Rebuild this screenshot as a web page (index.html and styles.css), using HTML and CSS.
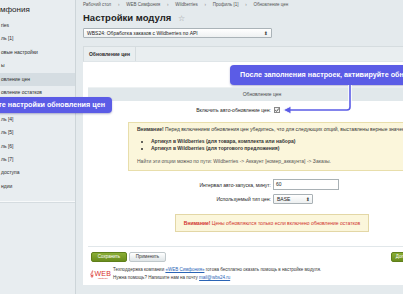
FILE: index.html
```html
<!DOCTYPE html>
<html lang="ru">
<head>
<meta charset="utf-8">
<link rel="stylesheet" href="styles.css">
</head>
<body>
<div class="page">
  <aside class="side">
    <div class="side-title">мфония</div>
    <ul class="menu">
      <li>ries</li>
      <li>ль [1]</li>
      <li>овые настройки</li>
      <li>ы</li>
      <li class="active">овление цен</li>
      <li>овление остатков</li>
      <li></li>
      <li>ль [4]</li>
      <li>ль [5]</li>
      <li>ль [6]</li>
      <li>ль [7]</li>
      <li>доступа</li>
      <li>ндии</li>
    </ul>
  </aside>
  <main class="main">
    <div class="crumbs">Рабочий стол <span class="sep">›</span> WEB Симфония <span class="sep">›</span> Wildberries <span class="sep">›</span> Профиль [1] <span class="sep">›</span> Обновление цен</div>
    <h1 class="title">Настройки модуля <span class="star">☆</span></h1>
    <div class="modsel"><span>WBS24: Обработка заказов с Wildberries по API</span><span class="updown">⬍</span></div>
    <div class="panel">
      <div class="tabs"><div class="tab">Обновление цен</div></div>
      <div class="content">
        <div class="inner">
          <div class="heading">Обновление цен</div>
          <div class="row check-row">
            <div class="lbl">Включить авто-обновление цен:</div>
            <div class="ctl"><span class="cb"><svg width="6" height="6" viewBox="0 0 6 6"><path d="M1.2 3.1 L2.5 4.4 L4.9 1.4" fill="none" stroke="#555" stroke-width="1"/></svg></span></div>
          </div>
          <div class="note">
            <p><b>Внимание!</b> Перед включением обновления цен убедитесь, что для следующих опций, выставлены верные значения</p>
            <ul>
              <li><b>Артикул в Wildberries (для товара, комплекта или набора)</b></li>
              <li><b>Артикул в Wildberries (для торгового предложения)</b></li>
            </ul>
            <p class="path">Найти эти опции можно по пути: Wildberries -&gt; Аккаунт [номер_аккаунта] -&gt; Заказы.</p>
          </div>
          <div class="row field-row">
            <div class="lbl">Интервал авто-запуска, минут:</div>
            <div class="ctl"><span class="input">60</span></div>
          </div>
          <div class="row type-row">
            <div class="lbl">Используемый тип цен:</div>
            <div class="ctl"><span class="select">BASE<span class="updown">⬍</span></span></div>
          </div>
          <div class="warn"><b>Внимание!</b> Цены обновляются только если включено обновление остатков</div>
        </div>
        <div class="buttons">
          <span class="btn green">Сохранить</span>
          <span class="btn gray">Применить</span>
          <span class="btn green right">Дополнительно</span>
        </div>
        <div class="footer">
          <div class="logo">
            <svg width="6" height="12" viewBox="0 0 6 12"><path d="M3.5 11 C1 11 1 8 3 8 C5 8 5 10.5 3 10.5 M3 11 L3.2 1.5 C3.3 0.5 4.8 0.8 4.2 2.2 C3.6 3.6 1 5 1 7 C1 9.5 5.5 9.5 5.2 7" fill="none" stroke="#d8322c" stroke-width="0.8"/></svg>
            <span class="logo-text"><span class="logo-web">WEB</span><span class="logo-sub">симфония</span></span>
          </div>
          <div class="ftext">
            <div>Техподдержка компании <a href="#">«WEB Симфония»</a> готова бесплатно оказать помощь в настройке модуля.</div>
            <div>Нужна помощь? Напишите нам на почту <a href="#">mail@wbs24.ru</a></div>
          </div>
        </div>
      </div>
    </div>
  </main>
</div>
<div class="callout callout-a">После заполнения настроек, активируйте обновление</div>
<div class="callout callout-b">те настройки обновления цен</div>
<svg class="arrow" width="403" height="294" viewBox="0 0 403 294">
  <path d="M350 85 L350 107 Q350 110 347 110 L290 110" fill="none" stroke="#fff" stroke-width="3.5"/>
  <path d="M283 110 L291 106 L291 114 Z" fill="#5b5ce6" stroke="#fff" stroke-width="1"/>
  <path d="M350 85 L350 107 Q350 110 347 110 L290 110" fill="none" stroke="#5b5ce6" stroke-width="1.6"/>
</svg>
</body>
</html>
```
FILE: styles.css
```css
* { box-sizing: border-box; }
html, body { margin: 0; padding: 0; }
body {
  width: 403px;
  height: 294px;
  overflow: hidden;
  position: relative;
  background: #e4eaed;
  color: #333;
  font-family: "Liberation Sans", Arial, sans-serif;
}
.page { display: flex; height: 294px; }

/* sidebar */
.side {
  width: 76px;
  flex: none;
  background: #e8edf0;
  border-right: 1px solid #cdd5d9;
}
.side-title {
  font-size: 8px;
  line-height: 10px;
  padding-top: 5px;
  color: #222;
  white-space: nowrap;
}
.menu {
  list-style: none;
  margin: 4px 0 0;
  padding: 0 0 8px;
  border-bottom: 1px solid #f7f9fa;
  box-shadow: 0 1px 0 #d5dce0;
}
.menu li {
  height: 13.4px;
  line-height: 13.4px;
  font-size: 5px;
  padding-left: 1px;
  white-space: nowrap;
  color: #2c2c2c;
}
.menu li.active { background: #d5dde2; }

/* main */
.main {
  flex: none;
  width: 327px;
  padding: 2px 0 0 7px;
}
.crumbs {
  font-size: 4.5px;
  line-height: 6px;
  height: 6px;
  color: #555;
  white-space: nowrap;
}
.crumbs .sep { margin: 0 5.5px; color: #888; }
.title {
  margin: 4px 0 0;
  font-size: 9.5px;
  line-height: 12px;
  height: 12px;
  font-weight: bold;
  color: #222;
  white-space: nowrap;
}
.star { font-weight: normal; color: #999; font-size: 8px; margin-left: 4px; font-family: "DejaVu Sans", sans-serif; }
.modsel {
  margin-top: 4px;
  width: 189px;
  height: 10px;
  border: 1px solid #aab3b8;
  background: linear-gradient(#ffffff, #eef1f2);
  border-radius: 1px;
  font-size: 5px;
  line-height: 8px;
  padding: 0 3px;
  display: flex;
  justify-content: space-between;
  white-space: nowrap;
  color: #222;
}
.updown { font-size: 5px; color: #444; font-family: "DejaVu Sans", sans-serif; }

.panel { width: 360px; margin-top: 8px; }
.tabs {
  height: 16px;
  background: #e9eef0;
  border: 1px solid #d5dcdf;
  border-bottom-color: #dfe5e8;
  display: flex;
}
.tab {
  width: 52px;
  border-right: 1px solid #d5dcdf;
  font-size: 5px;
  line-height: 14px;
  font-weight: bold;
  text-align: center;
  color: #2b2b2b;
}
.content {
  background: #fff;
  padding: 25px 0 3px 5px;
  height: 223px;
}
.inner {
  width: 348px;
  border-top: 1px solid #edf1f2;
  padding-bottom: 14px;
  border-bottom: 1px solid #e1e7ea;
}
.heading {
  height: 13px;
  line-height: 13px;
  background: #e1e8eb;
  text-align: center;
  font-size: 5px;
  color: #4b4b4b;
}
.row { display: flex; align-items: center; }
.lbl {
  width: 183px;
  flex: none;
  text-align: right;
  font-size: 5px;
  color: #222;
  white-space: nowrap;
}
.ctl { margin-left: 2px; display: flex; align-items: center; }
.check-row { height: 14px; margin-top: 2px; }
.cb {
  width: 6px; height: 6px;
  border: 0.6px solid #888;
  background: #f2f2f2;
  margin-left: 1px;
  display: block;
  position: relative;
}
.cb svg { position: absolute; left: -0.6px; top: -0.6px; }
.note {
  margin: 5px 0 0 40px;
  height: 49px;
  background: #fbf6db;
  border: 1px solid #e8deab;
  padding: 3px 0 0 8px;
  font-size: 5px;
  line-height: 7px;
  color: #333;
  white-space: nowrap;
}
.note p { margin: 0; }
.note ul { margin: 5px 0 0; padding-left: 14px; }
.note li { line-height: 7px; }
.note .path { margin-top: 6px; color: #555; }
.field-row { height: 11px; margin-top: 8px; }
.input {
  width: 66px; height: 11px;
  border: 1px solid #a9b1b5;
  background: #fff;
  font-size: 5px;
  line-height: 9px;
  padding-left: 2px;
  display: block;
  color: #222;
}
.type-row { height: 10px; margin-top: 4px; }
.select {
  width: 40px; height: 10px;
  border: 1px solid #a9b1b5;
  border-radius: 1px;
  background: linear-gradient(#fff, #eceff0);
  font-size: 5px;
  line-height: 8px;
  padding: 0 2px 0 3px;
  display: flex;
  justify-content: space-between;
  color: #222;
}
.warn {
  margin: 10px 0 0 87px;
  width: 194px;
  height: 18px;
  background: #fbf6db;
  border: 1px solid #e3d7a6;
  text-align: center;
  font-size: 5px;
  line-height: 16px;
  color: #d0322d;
  white-space: nowrap;
}
.buttons {
  display: flex;
  gap: 2px;
  padding: 5px 3px 0 3px;
  width: 348px;
}
.btn {
  height: 10px;
  font-size: 4.5px;
  line-height: 8px;
  border-radius: 2px;
  text-align: center;
  white-space: nowrap;
  display: block;
}
.btn.green {
  width: 36px;
  background: linear-gradient(#8aae35, #6a8d1d);
  border: 1px solid #5f7f1a;
  color: #fff;
}
.btn.gray {
  width: 37px;
  background: linear-gradient(#ffffff, #dfe5e7);
  border: 1px solid #c0c8cb;
  color: #333;
}
.btn.right { margin-left: auto; width: 42px; }
.footer {
  display: flex;
  align-items: center;
  margin-top: 5px;
  padding-left: 2px;
  height: 13px;
}
.logo { display: flex; align-items: flex-end; width: 21px; flex: none; }
.logo-text { display: flex; flex-direction: column; align-items: center; margin-left: 0.5px; }
.logo-web {
  font-size: 7px;
  line-height: 7px;
  font-weight: normal;
  color: #d8322c;
  letter-spacing: 0.2px;
}
.logo-sub { font-size: 2px; line-height: 3px; color: #d8322c; }
.ftext { font-size: 4.5px; line-height: 7.5px; color: #333; white-space: nowrap; margin-left: 2px; }
.ftext a { color: #2a64b5; text-decoration: underline; }

/* overlays */
.callout {
  position: absolute;
  background: #5b5ce6;
  color: #fff;
  font-weight: bold;
  font-size: 7.2px;
  border-radius: 4px;
  white-space: nowrap;
  box-shadow: 0 1px 2px rgba(40, 40, 120, 0.35);
}
.callout-a {
  left: 230px; top: 65px;
  width: 210px; height: 20px;
  line-height: 20px;
  padding-left: 10px;
}
.callout-b {
  left: -10px; top: 97px;
  width: 122px; height: 16px;
  line-height: 16px;
  text-align: right;
  padding-right: 7px;
}
.arrow { position: absolute; left: 0; top: 0; pointer-events: none; }
```
